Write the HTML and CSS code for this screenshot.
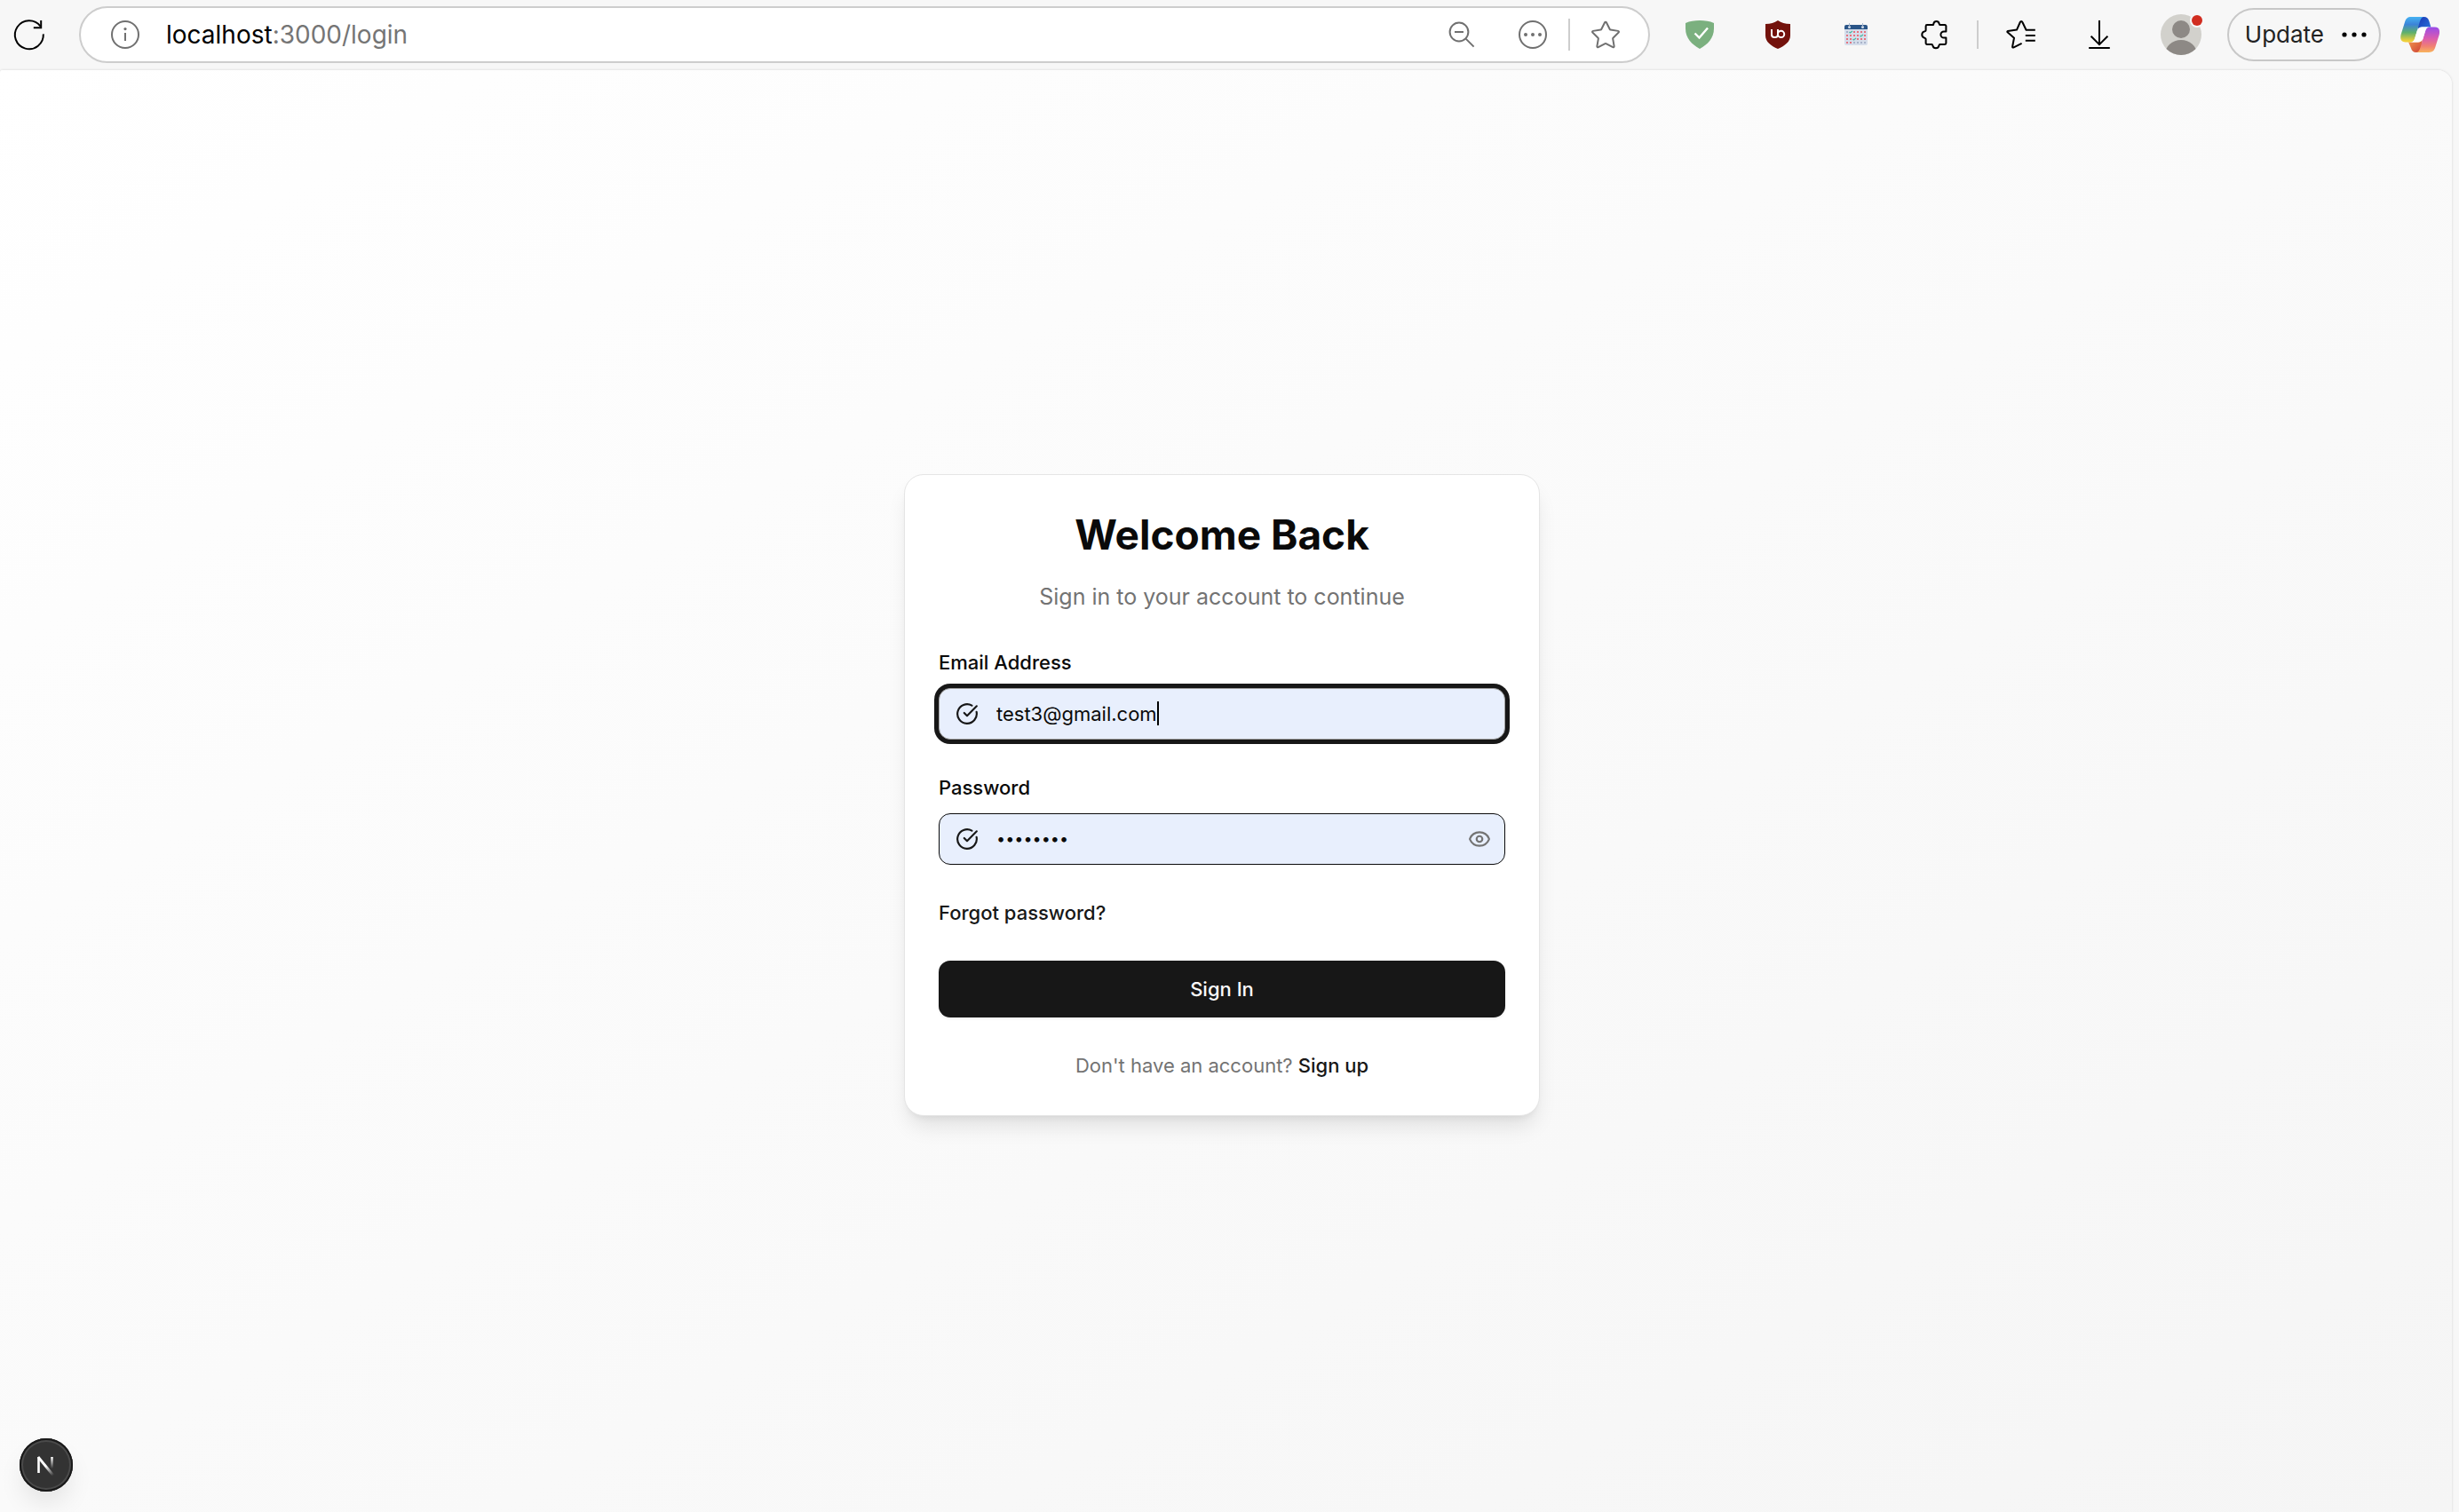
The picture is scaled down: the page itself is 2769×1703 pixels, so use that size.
FILE: index.html
```html
<!DOCTYPE html>
<html lang="en">
<head>
<meta charset="utf-8">
<meta name="viewport" content="width=device-width, initial-scale=1">
<title>Sign In</title>
<link rel="stylesheet" href="styles.css">
</head>
<body>
<header class="toolbar">
  <button class="reload" type="button" aria-label="Reload">
    <svg class="icon" viewBox="0 0 20 20"><path d="M17.9 9.6A8 8 0 1 1 16.3 5.2" transform="translate(0 .1)"/><path d="M16.6 2v4.1h-4.2"/></svg>
  </button>
  <div class="address">
    <button class="address-btn" type="button" aria-label="Site information">
      <svg class="icon" viewBox="0 0 20 20"><circle cx="10" cy="10" r="7.5"/><path d="M10 9v4.5"/><circle class="dot" cx="10" cy="6.8" r=".8"/></svg>
    </button>
    <a class="url" href="#"><span class="host">localhost</span>:3000/login</a>
    <button class="address-btn zoom" type="button" aria-label="Zoom out">
      <svg class="icon" viewBox="0 0 20 20"><circle cx="8.5" cy="8.5" r="5.2"/><path d="M6 8.5h5M12.3 12.3l4.5 4.5"/></svg>
    </button>
    <button class="address-btn" type="button" aria-label="More actions">
      <svg class="icon" viewBox="0 0 20 20"><circle cx="10" cy="10" r="7.5"/><circle class="dot" cx="6" cy="10" r="1"/><circle class="dot" cx="10" cy="10" r="1"/><circle class="dot" cx="14" cy="10" r="1"/></svg>
    </button>
    <span class="divider address-divider"></span>
    <button class="address-btn" type="button" aria-label="Add to favorites">
      <svg class="icon solid" viewBox="0 0 20 20"><path fill-rule="evenodd" d="M9.1 2.9a1 1 0 0 1 1.8 0l1.93 3.91 4.31.63a1 1 0 0 1 .56 1.7l-3.12 3.05.73 4.3a1 1 0 0 1-1.45 1.05L10 15.51l-3.86 2.03a1 1 0 0 1-1.45-1.05l.74-4.3L2.3 9.14a1 1 0 0 1 .56-1.7l4.31-.63L9.1 2.9zM10 3.35L8.07 7.25a1 1 0 0 1-.75.55L3 8.43l3.12 3.04a1 1 0 0 1 .3.89l-.75 4.3 3.87-2.03a1 1 0 0 1 .93 0l3.86 2.03-.74-4.3a1 1 0 0 1 .29-.89L17 8.43l-4.32-.63a1 1 0 0 1-.75-.55L10 3.35z"/></svg>
    </button>
  </div>
  <nav class="extensions" aria-label="Extensions">
    <button class="tool" type="button" aria-label="Ad blocker">
      <svg class="glyph" viewBox="0 0 32 32"><path fill="#7bb07f" d="M0 3C5 .8 10 0 16 0s11 .8 16 3v6c0 11-7 18-16 23C7 27 0 20 0 9z"/><path d="M10.500 14.500l5 5L25 8.500" fill="none" stroke="#fff" stroke-width="2.400"/></svg>
    </button>
    <button class="tool" type="button" aria-label="Content shield">
      <svg class="glyph" viewBox="0 0 32 32"><path fill="#73120c" d="M16 0c4 2.600 8 4 14 4v13c0 7-6 11.500-14 15C8 28.500 2 24 2 17V4c6 0 10-1.400 14-4z"/><path d="M9 10v6a3 3 0 0 0 3 3h1a3 3 0 0 0 3-3v-6M16 10v4" fill="none" stroke="#fff" stroke-width="2"/><circle cx="19.600" cy="15.400" r="3.600" fill="none" stroke="#fff" stroke-width="2"/></svg>
    </button>
    <button class="tool" type="button" aria-label="Calendar">
      <svg class="glyph" viewBox="0 0 32 32">
        <path fill="#d6deeb" d="M3 9h26v17a2 2 0 0 1-2 2H5a2 2 0 0 1-2-2z"/>
        <path fill="#2a5588" d="M3 10V7a2 2 0 0 1 2-2h22a2 2 0 0 1 2 2v3z"/>
        <circle cx="8.500" cy="7.500" r="1.500" fill="#d6deeb"/><circle cx="23.500" cy="7.500" r="1.500" fill="#d6deeb"/>
        <path d="M8.500 3v4M23.500 3v4" stroke="#a5b7cf" stroke-width="1"/>
        <path d="M5 13h2M13 25h14" stroke="#a9b3ca" stroke-width="2" stroke-dasharray="2 2"/>
        <path d="M13 13h14M5 17h14M25 17h2M5 21h6M17 21h10M5 25h6" stroke="#e5737f" stroke-width="2" stroke-dasharray="2 2"/>
        <path d="M8.500 13l1 1 2.500-2M20.500 17l1 1 2.500-2M12.500 21l1 1 2.500-2" fill="none" stroke="#4bb9a5" stroke-width="1.300"/>
      </svg>
    </button>
    <button class="tool" type="button" aria-label="Extensions">
      <svg class="icon" viewBox="0 0 20 20"><path stroke-linejoin="round" d="M5.300 5.200a.7.7 0 0 1 .7-.7h3.300c.4 0 .3-.4.400-.8a1.600 1.600 0 0 1 3.100 0c.1.400 0 .8.500.8h2.800a.7.7 0 0 1 .6.600v3.100h-1.200a1.800 1.800 0 0 0 0 3.600h1.200v3a.7.7 0 0 1-.7.700h-2.700c-.5 0-.5.300-.6.700a1.800 1.800 0 0 1-3.500 0c-.1-.4-.1-.7-.6-.7H6a.7.7 0 0 1-.7-.7v-2.300c0-.5-.3-.5-.7-.6a1.900 1.900 0 0 1 0-3.700c.4-.1.700-.1.700-.6z"/></svg>
    </button>
  </nav>
  <span class="divider"></span>
  <nav class="extensions" aria-label="Browser">
    <button class="tool" type="button" aria-label="Favorites">
      <svg class="icon" viewBox="0 0 20 20"><path stroke-linejoin="round" d="M17.900 7.400h-5.100L10.700 3c-.3-.7-1-.7-1.300 0L7.500 7.300l-5 .7c-.4.100-.4.400-.2.600L6 11.900l-.9 4.700c-.1.600.2.800.7.600l4.500-2.300"/><path d="M12.400 10.500h5.500M12.400 13.400h5.500"/></svg>
    </button>
    <button class="tool" type="button" aria-label="Downloads">
      <svg class="icon" viewBox="0 0 20 20"><path d="M10 2v13.500M5.300 10.900l4.700 4.700 4.700-4.700M4.100 17.500h11.800"/></svg>
    </button>
    <button class="tool profile" type="button" aria-label="Profile">
      <svg class="avatar" viewBox="0 0 48 48"><defs><clipPath id="face"><circle cx="24" cy="24" r="23"/></clipPath></defs><circle cx="24" cy="24" r="23" fill="#d2d1cc"/><g clip-path="url(#face)" fill="#8d8985"><circle cx="24" cy="18" r="10"/><ellipse cx="24" cy="46" rx="18" ry="16"/></g><circle cx="42" cy="8" r="8" fill="#f7f7f7"/><circle cx="42" cy="8" r="6" fill="#d12d20"/></svg>
    </button>
  </nav>
  <button class="update" type="button">Update
    <svg class="more" viewBox="0 0 28 6"><circle cx="3" cy="3" r="2.600"/><circle cx="14" cy="3" r="2.600"/><circle cx="25" cy="3" r="2.600"/></svg>
  </button>
  <button class="copilot" type="button" aria-label="Copilot">
    <svg viewBox="908 57 133 121">
      <defs>
        <linearGradient id="cool" x1="0" y1="0" x2="0" y2="1"><stop offset="0" stop-color="#45b2f2"/><stop offset=".3" stop-color="#3c84d8"/><stop offset=".62" stop-color="#5fb06c"/><stop offset=".95" stop-color="#f0d03a"/></linearGradient>
        <linearGradient id="warm" x1="0" y1="0" x2="0" y2="1"><stop offset="0" stop-color="#9a4be8"/><stop offset=".45" stop-color="#db5cae"/><stop offset=".75" stop-color="#f07f74"/><stop offset="1" stop-color="#f9b45c"/></linearGradient>
        <linearGradient id="navy" x1="0" y1="0" x2="1" y2="1"><stop offset="0" stop-color="#1a35b5"/><stop offset="1" stop-color="#2b78dd"/></linearGradient>
        <linearGradient id="rust" x1="0" y1="0" x2="1" y2="1"><stop offset="0" stop-color="#f7a250"/><stop offset="1" stop-color="#cc3f37"/></linearGradient>
      </defs>
      <path fill="url(#navy)" d="M970 57h18c10 0 15 5 18 15l6 20h-30c-8 0-12 4-15 12z"/>
      <path fill="url(#rust)" d="M980 178h-18c-10 0-15-5-18-15l-6-14c-1-4-3-6-8-6h38c8 0 12-4 15-12z"/>
      <path fill="url(#cool)" d="M945 57h43c-8 1-11 8-14 17l-17 56c-3 9-7 13-15 13h-17c-14 0-19-10-15-26l13-42c4-12 9-18 22-18z"/>
      <path fill="url(#warm)" d="M1005 178h-43c8-1 11-8 14-17l17-56c3-9 7-13 15-13h17c14 0 19 10 15 26l-13 42c-4 12-9 18-22 18z"/>
      <path fill="#fff" d="M982 92h26c-8 0-12 4-15 13l-8 26c-3 9-9 12-17 12h-26c8 0 12-4 15-13l8-26c3-9 9-12 17-12z"/>
    </svg>
  </button>
</header>

<main class="page">
  <section class="card">
    <div class="card-head">
      <h1 class="title">Welcome Back</h1>
      <p class="subtitle">Sign in to your account to continue</p>
    </div>
    <form class="form">
      <div class="field">
        <label class="label" for="email">Email Address</label>
        <div class="control focused">
          <svg class="lucide" viewBox="0 0 24 24"><path d="M21.801 10A10 10 0 1 1 17 3.335"/><path d="m9 11 3 3L22 4"/></svg>
          <span class="entry"><input class="input email" id="email" type="email" value="test3@gmail.com"><span class="caret"></span></span>
        </div>
      </div>
      <div class="field">
        <label class="label" for="password">Password</label>
        <div class="control">
          <svg class="lucide" viewBox="0 0 24 24"><path d="M21.801 10A10 10 0 1 1 17 3.335"/><path d="m9 11 3 3L22 4"/></svg>
          <input class="input password" id="password" type="password" value="password">
          <button class="reveal" type="button" aria-label="Show password">
            <svg class="lucide" viewBox="0 0 24 24"><path d="M2.062 12.348a1 1 0 0 1 0-.696 10.750 10.750 0 0 1 19.876 0 1 1 0 0 1 0 .696 10.750 10.750 0 0 1-19.876 0"/><circle cx="12" cy="12" r="3"/></svg>
          </button>
        </div>
      </div>
      <a class="link forgot" href="#">Forgot password?</a>
      <button class="submit" type="submit">Sign In</button>
      <p class="signup">Don't have an account? <a class="link" href="#">Sign up</a></p>
    </form>
  </section>
  <button class="dev-badge" type="button" aria-label="Next.js dev tools">
    <svg viewBox="0 0 60 60">
      <defs>
        <linearGradient id="diag" gradientUnits="userSpaceOnUse" x1="31" y1="30" x2="39" y2="41"><stop offset="0" stop-color="#fff"/><stop offset="1" stop-color="#fff" stop-opacity="0"/></linearGradient>
        <linearGradient id="stem" gradientUnits="userSpaceOnUse" x1="0" y1="21" x2="0" y2="34"><stop offset="0" stop-color="#fff"/><stop offset="1" stop-color="#fff" stop-opacity="0"/></linearGradient>
      </defs>
      <path d="M21.500 39V21" stroke="#fff" stroke-width="2.600"/><path d="M21 21l17.500 21.500" stroke="url(#diag)" stroke-width="2.800"/><path d="M35.200 21h2.600v13h-2.600z" fill="url(#stem)"/>
    </svg>
  </button>
</main>
</body>
</html>
```
FILE: styles.css
```css
* {
  box-sizing: border-box;
}

body {
  margin: 0;
  min-height: 100vh;
  display: flex;
  flex-direction: column;
  background: #f7f7f7;
  color: #0a0a0a;
  font-family: Inter, "Liberation Sans", sans-serif;
  font-size: 22px;
}

h1,
p {
  margin: 0;
}

button {
  padding: 0;
  border: 0;
  background: none;
  color: inherit;
  font: inherit;
}

svg {
  display: block;
}

/* Browser toolbar */
.toolbar {
  display: flex;
  align-items: center;
  height: 79px;
  padding: 0 22px 2px 13px;
}

.icon {
  width: 40px;
  height: 40px;
  fill: none;
  stroke: currentColor;
  stroke-width: 1;
}

.icon .dot,
.icon.solid {
  fill: currentColor;
  stroke: none;
}

.reload {
  margin-right: 36px;
  color: #000;
}

.address {
  flex: 1;
  display: flex;
  align-items: center;
  height: 64px;
  padding: 0 28px 0 30px;
  border: 2px solid #cdcdcd;
  border-radius: 32px;
  background: #fff;
  color: #707070;
}

.url {
  flex: 1;
  padding-left: 26px;
  color: #757575;
  font-size: 28px;
  line-height: 40px;
  text-decoration: none;
}

.host {
  color: #000;
}

.zoom {
  margin-right: 40px;
}

.divider {
  width: 2px;
  height: 32px;
  margin: 0 4px;
  background: #cdcdcd;
}

.address-divider {
  height: 36px;
  margin: 0 20px;
}

.extensions {
  display: flex;
  color: #000;
}

.address + .extensions {
  margin-left: 12px;
}

.tool {
  display: flex;
  align-items: center;
  justify-content: center;
  width: 88px;
  height: 60px;
}

.glyph {
  width: 32px;
  height: 32px;
}

.profile {
  width: 96px;
}

.avatar {
  width: 48px;
  height: 48px;
  overflow: visible;
}

.update {
  display: flex;
  align-items: center;
  gap: 20px;
  height: 60px;
  margin: 0 22px 0 4px;
  padding: 0 14px 0 18px;
  border: 2px solid #c8c8c8;
  border-radius: 30px;
  color: #222;
  font-size: 26px;
}

.more {
  width: 28px;
  height: 6px;
  fill: #000;
}

.copilot svg {
  width: 44px;
  height: 40px;
}

/* Page */
.page {
  position: relative;
  flex: 1;
  display: flex;
  align-items: center;
  justify-content: center;
  margin-right: 8px;
  padding: 8px 9px 0 0;
  border-radius: 3px 16px 0 0;
  background: linear-gradient(to bottom right, #fff, #f5f5f5);
  box-shadow: 0 0 3px rgb(0 0 0 / 15%);
}

.card {
  width: 100%;
  max-width: 716px;
  padding: 38px 38px 40px;
  border: 1px solid #e5e5e5;
  border-radius: 22px;
  background: #fff;
  box-shadow: 0 16px 24px -5px rgb(0 0 0 / 10%), 0 6px 10px -6px rgb(0 0 0 / 10%);
}

.card-head {
  display: grid;
  gap: 21px;
  margin-bottom: 38px;
  text-align: center;
}

.title {
  font-size: 46px;
  font-weight: 700;
  line-height: 58px;
}

.subtitle {
  color: #737373;
  font-size: 25px;
  line-height: 40px;
}

.form {
  display: flex;
  flex-direction: column;
  gap: 38px;
}

.field {
  display: grid;
  gap: 13px;
}

.label,
.link {
  font-weight: 500;
  line-height: 32px;
}

.control {
  display: flex;
  align-items: center;
  gap: 20px;
  height: 58px;
  padding: 0 15px 0 18px;
  border: 1px solid #0a0a0a;
  border-radius: 13px;
  background: #e8effd;
  color: #171717;
}

.focused {
  border-color: #a1a1a1;
  box-shadow: 0 0 0 5px #171717;
}

.lucide {
  flex: none;
  width: 26px;
  height: 26px;
  fill: none;
  stroke: currentColor;
  stroke-width: 2;
  stroke-linecap: round;
  stroke-linejoin: round;
}

.entry {
  flex: 1;
  display: flex;
  align-items: center;
}

.input {
  min-width: 0;
  padding: 0;
  border: 0;
  outline: 0;
  background: none;
  color: #0a0a0a;
  font: inherit;
}

.email {
  field-sizing: content;
}

.caret {
  width: 2px;
  height: 27px;
  background: #000;
}

.password {
  flex: 1;
  font-size: 18px;
}

.reveal {
  color: #737373;
}

.link {
  color: #171717;
  text-decoration: none;
}

.forgot {
  align-self: flex-start;
}

.submit {
  height: 64px;
  border-radius: 13px;
  background: #171717;
  box-shadow: 0 2px 3px rgb(0 0 0 / 5%);
  color: #fafafa;
  font-weight: 500;
}

.signup {
  color: #737373;
  line-height: 32px;
  text-align: center;
}

/* Floating developer badge */
.dev-badge {
  position: absolute;
  left: 22px;
  bottom: 23px;
  width: 60px;
  height: 60px;
  border-radius: 50%;
  background: #333;
  box-shadow: inset 0 0 0 2px #1a1a1a, inset 0 0 0 4px #4a4a4a, 0 16px 32px -8px rgb(0 0 0 / 14%);
}
```
